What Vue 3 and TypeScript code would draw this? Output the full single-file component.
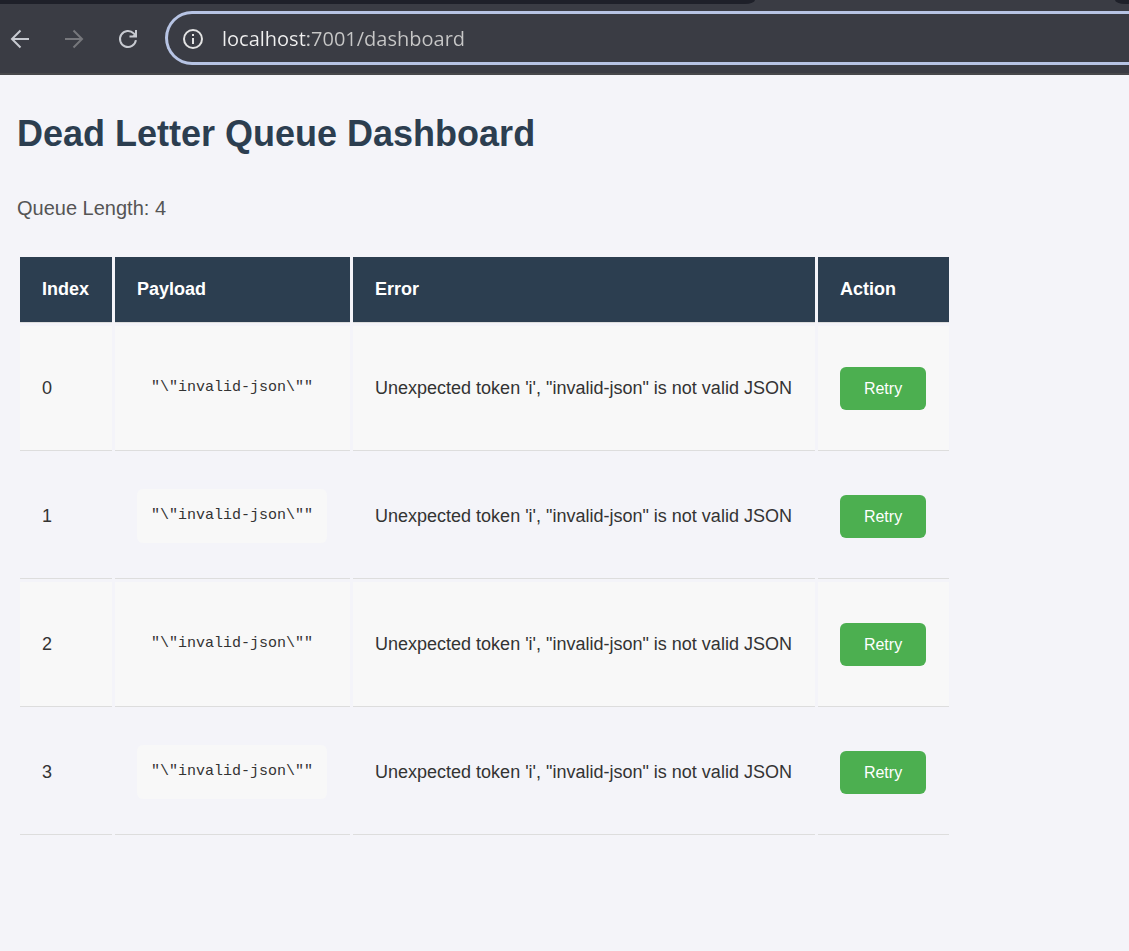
<script setup lang="ts">
import { ref } from 'vue'

interface DeadLetter {
  index: number
  payload: string
  error: string
}

const address = ref('localhost:7001/dashboard')

const letters = ref<DeadLetter[]>(
  [0, 1, 2, 3].map((index) => ({
    index,
    payload: JSON.stringify('"invalid-json"'),
    error: `Unexpected token 'i', "invalid-json" is not valid JSON`,
  })),
)
</script>

<template>
  <div class="window">
    <header class="chrome">
      <div class="tabs">
        <span class="tabs-before"></span>
        <span class="tab-active"></span>
        <span class="tabs-after"></span>
      </div>
      <div class="toolbar">
        <nav class="nav">
          <button type="button" class="nav-button" aria-label="Back">
            <svg viewBox="0 0 20 20" width="20" height="20" fill="none" stroke="#c7cad1" stroke-width="2">
              <path d="M19 10H2.5M10.5 1.5L2 10l8.500 8.500" />
            </svg>
          </button>
          <button type="button" class="nav-button" aria-label="Forward" disabled>
            <svg viewBox="0 0 20 20" width="20" height="20" fill="none" stroke="#76777c" stroke-width="2">
              <path d="M1 10h16.500M9.500 1.500L18 10l-8.500 8.500" />
            </svg>
          </button>
          <button type="button" class="nav-button" aria-label="Reload">
            <svg viewBox="0 0 20 20" width="20" height="20" fill="none" stroke="#c7cad1" stroke-width="2">
              <path d="M17.900 11.200A8 8 0 1 1 15.700 4.400L17.500 6.200" />
              <path d="M18 1v6.500h-6.500" />
              <path d="M18 3.500v4h-4z" fill="#c7cad1" stroke="none" />
            </svg>
          </button>
        </nav>
        <div class="address">
          <button type="button" class="info" aria-label="View site information">
            <svg viewBox="0 0 20 20" width="20" height="20" fill="none" stroke="#e3e3e3" stroke-width="2">
              <circle cx="10" cy="10" r="9" />
              <path d="M10 9v6M10 5v2" />
            </svg>
          </button>
          <input v-model="address" class="url" type="text" aria-label="Address" spellcheck="false" />
        </div>
      </div>
    </header>

    <main class="page">
      <h1>Dead Letter Queue Dashboard</h1>
      <p class="length">Queue Length: {{ letters.length }}</p>
      <table>
        <thead>
          <tr>
            <th scope="col">Index</th>
            <th scope="col">Payload</th>
            <th scope="col">Error</th>
            <th scope="col">Action</th>
          </tr>
        </thead>
        <tbody>
          <tr v-for="letter in letters" :key="letter.index">
            <td>{{ letter.index }}</td>
            <td><pre>{{ letter.payload }}</pre></td>
            <td>{{ letter.error }}</td>
            <td><button type="button" class="retry">Retry</button></td>
          </tr>
        </tbody>
      </table>
    </main>
  </div>
</template>

<style>
body {
  margin: 0;
  background: #f4f4f9;
}
</style>

<style scoped>
.window {
  min-height: 100vh;
  background: #f4f4f9;
  color: #333;
  font-family: "Liberation Sans", Arial, sans-serif;
  overflow: hidden;
}

.chrome {
  background: #3a3c44;
  border-bottom: 2px solid #47484b;
}

.tabs {
  display: flex;
  height: 4px;
}

.tabs-before {
  flex: 755;
  background: #1e2029;
  border-bottom-right-radius: 10px 4px;
}

.tab-active {
  flex: 360;
}

.tabs-after {
  flex: 14;
  background: #1e2029;
  border-bottom-left-radius: 10px 4px;
}

.toolbar {
  display: flex;
  align-items: center;
  padding: 7px 0 8px 10px;
}

.nav {
  display: flex;
  gap: 34px;
  margin-right: 27px;
  padding-top: 2px;
}

.nav-button,
.info {
  display: flex;
  padding: 0;
  border: 0;
  background: none;
}

.nav-button {
  cursor: pointer;
}

.address {
  flex: 1;
  display: flex;
  align-items: center;
  gap: 19px;
  height: 46px;
  padding: 2px 0 0 15px;
  border: 3px solid #b7c4e4;
  border-right: 0;
  border-radius: 27px 0 0 27px;
}

.url {
  flex: 1;
  min-width: 0;
  height: 32px;
  padding: 0;
  border: 0;
  outline: 0;
  color: #c7c7c7;
  background: linear-gradient(to right, #f0f0f0 86px, #c7c7c7 86px);
  background-clip: text;
  -webkit-background-clip: text;
  -webkit-text-fill-color: transparent;
  font: 20px/32px "Open Sans", "Noto Sans", sans-serif;
}

.page {
  padding: 38px 17px;
}

h1 {
  margin: 0 0 41px;
  color: #2c3e50;
  font-size: 36px;
  line-height: 42px;
}

.length {
  margin: 0 0 34px;
  color: #555;
  font-size: 20px;
  line-height: 24px;
}

table {
  border-collapse: separate;
  border-spacing: 3px;
  font-size: 18px;
  line-height: 21px;
}

th,
td {
  padding: 22px 23px 22px 22px;
  border-bottom: 1px solid #ddd;
  text-align: left;
  vertical-align: middle;
}

th {
  background: #2c3e50;
  color: #fff;
}

tbody tr:nth-child(odd) td {
  background: #f8f8f8;
}

pre {
  margin: 13px 0;
  padding: 14px;
  border-radius: 6px;
  background: #f8f8f8;
  font: 15px/26px "Liberation Mono", "Courier New", monospace;
}

.retry {
  display: block;
  padding: 12px 24px;
  border: 0;
  border-radius: 6px;
  background: #4caf50;
  color: #fff;
  font: 16px/19px "Liberation Sans", Arial, sans-serif;
  cursor: pointer;
}
</style>
